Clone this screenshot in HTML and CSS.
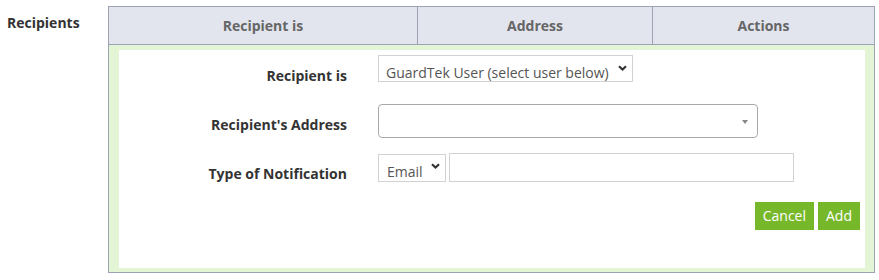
FILE: index.html
```html
<!DOCTYPE html>
<html lang="en">

<head>
  <title>Recipients</title>
  <link rel="stylesheet" href="styles.css">
</head>

<body>

  <section class="field">
    <h2 class="field-label">Recipients</h2>

    <div class="recipients">
      <div class="recipients-head">
        <div class="head-cell">Recipient is</div>
        <div class="head-cell">Address</div>
        <div class="head-cell">Actions</div>
      </div>

      <div class="recipients-body">
        <form class="recipient-form">
          <div class="form-row">
            <label class="form-label" for="recipient-type">Recipient is</label>
            <div class="form-control">
              <span class="select-wrap">
                <select id="recipient-type" class="select select-type">
                  <option>GuardTek User (select user below)</option>
                  <option>Email address</option>
                </select>
                <svg class="chevron" width="9" height="6" viewBox="0 0 9 6" fill="none" stroke="currentColor"
                  stroke-width="2.2">
                  <path d="M1 1.2 4.5 4.5 8 1.2" />
                </svg>
              </span>
            </div>
          </div>

          <div class="form-row">
            <label class="form-label" for="recipient-address">Recipient's Address</label>
            <div class="form-control">
              <!-- select2 style picker -->
              <div class="picker" id="recipient-address" tabindex="0">
                <span class="picker-value"></span>
                <span class="picker-arrow"></span>
              </div>
            </div>
          </div>

          <div class="form-row">
            <label class="form-label" for="notify-type">Type of Notification</label>
            <div class="form-control">
              <span class="select-wrap">
                <select id="notify-type" class="select select-notify">
                  <option>Email</option>
                  <option>SMS</option>
                </select>
                <svg class="chevron" width="9" height="6" viewBox="0 0 9 6" fill="none" stroke="currentColor"
                  stroke-width="2.2">
                  <path d="M1 1.2 4.5 4.5 8 1.2" />
                </svg>
              </span>
              <input class="text-input" type="text" aria-label="Notification target">
            </div>
          </div>

          <div class="form-actions">
            <button type="button" class="btn">Cancel</button>
            <button type="submit" class="btn">Add</button>
          </div>
        </form>
      </div>
    </div>
  </section>

</body>

</html>
```

FILE: styles.css
```css
* {
  box-sizing: border-box;
}

body {
  margin: 0;
  font-family: "Open Sans", "Liberation Sans", sans-serif;
  font-size: 14px;
  line-height: 20px;
  color: #333;
  background-color: #fff;
}

.field {
  display: flex;
  align-items: flex-start;
  padding-block-start: 6px;
}

.field-label {
  margin: 0;
  inline-size: 108px;
  padding-inline-start: 7px;
  padding-block-start: 7px;
  font-size: 14px;
  font-weight: 700;
  color: #333;
}

.recipients {
  inline-size: 767px;
  border: 1px solid #9ca3b2;
}

.recipients-head {
  display: grid;
  grid-template-columns: 309px 235px 1fr;
  background-color: #e2e5ee;
  border-block-end: 1px solid #9ca3b2;
}

.head-cell {
  block-size: 37px;
  padding-block-start: 9px;
  text-align: center;
  font-weight: 700;
  color: #666;

  &:not(:last-child) {
    border-inline-end: 1px solid #9ca3b2;
  }
}

.recipients-body {
  background-color: #e4f5d5;
  padding: 5px 9px 4px 10px;
}

.recipient-form {
  background-color: #fff;
  padding: 5px 5px 38px 0;
}

.form-row {
  display: grid;
  grid-template-columns: 228px 1fr;
  column-gap: 31px;
  align-items: start;
  min-block-size: 34px;
  margin-block-end: 15px;
}

.form-label {
  padding-block-start: 11px;
  text-align: end;
  font-weight: 700;
  color: #333;
}

.form-control {
  display: flex;
  align-items: flex-start;
  gap: 3px;
}

.select-wrap {
  position: relative;
  display: inline-block;
  color: #333;

  .chevron {
    position: absolute;
    inset-inline-end: 6px;
    inset-block-start: 10px;
    pointer-events: none;
  }
}

.select {
  appearance: none;
  margin: 0;
  border: 1px solid #d2d2d2;
  border-radius: 0;
  background-color: #fff;
  font: inherit;
  color: #555;
  padding: 8px 22px 0 7px;
  line-height: 18px;
}

.select-type {
  inline-size: 255px;
  block-size: 27px;
}

.select-notify {
  inline-size: 68px;
  block-size: 28px;
  padding-inline-start: 8px;
  margin-block-start: 1px;
}

.text-input {
  margin: 0;
  inline-size: 345px;
  block-size: 29px;
  border: 1px solid #d2d2d2;
  font: inherit;
  padding: 0 6px;
}

.picker {
  position: relative;
  inline-size: 380px;
  block-size: 34px;
  border: 1px solid #aaa;
  border-radius: 4px;
  background-color: #fff;
}

.picker-arrow {
  position: absolute;
  inset-inline-end: 9px;
  inset-block-start: 15px;
  border-style: solid;
  border-width: 4px 3px 0;
  border-color: #888 transparent transparent;
}

.form-actions {
  display: flex;
  justify-content: flex-end;
  gap: 4px;
}

.btn {
  cursor: pointer;
  border: 0;
  border-radius: 0;
  block-size: 28px;
  padding: 0 8px;
  background-color: #77b82a;
  color: #fff;
  font: inherit;
}
```
